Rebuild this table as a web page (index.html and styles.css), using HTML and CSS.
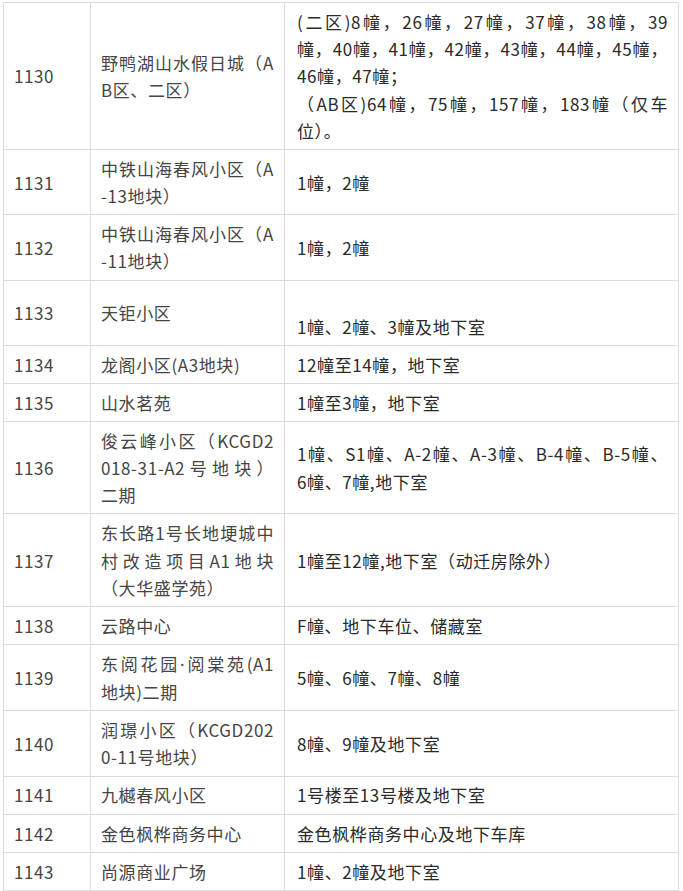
FILE: index.html
```html
<!DOCTYPE html>
<html lang="zh-CN">
<head>
<meta charset="utf-8">
<title>名单</title>
<link rel="stylesheet" href="styles.css">
</head>
<body>
<table class="list">
  <colgroup>
    <col class="c-no">
    <col class="c-name">
    <col class="c-scope">
  </colgroup>
  <tbody>
    <tr>
      <td class="no">1130</td>
      <td class="name"><span class="jl">野鸭湖山水假日城（A</span><span class="ln">B区、二区）</span></td>
      <td class="scope"><span class="jl">(二区)8幢，26幢，27幢，37幢，38幢，39</span><span class="jl">幢，40幢，41幢，42幢，43幢，44幢，45幢，</span><span class="ln">46幢，47幢；</span><span class="jl">（AB区)64幢，75幢，157幢，183幢（仅车</span><span class="ln">位）。</span></td>
    </tr>
    <tr>
      <td class="no">1131</td>
      <td class="name"><span class="jl">中铁山海春风小区（A</span><span class="ln">-13地块）</span></td>
      <td class="scope">1幢，2幢</td>
    </tr>
    <tr>
      <td class="no">1132</td>
      <td class="name"><span class="jl">中铁山海春风小区（A</span><span class="ln">-11地块）</span></td>
      <td class="scope">1幢，2幢</td>
    </tr>
    <tr>
      <td class="no">1133</td>
      <td class="name">天钜小区</td>
      <td class="scope"><span class="ln">&nbsp;</span><span class="ln">1幢、2幢、3幢及地下室</span></td>
    </tr>
    <tr>
      <td class="no">1134</td>
      <td class="name">龙阁小区(A3地块)</td>
      <td class="scope">12幢至14幢，地下室</td>
    </tr>
    <tr>
      <td class="no">1135</td>
      <td class="name">山水茗苑</td>
      <td class="scope">1幢至3幢，地下室</td>
    </tr>
    <tr>
      <td class="no">1136</td>
      <td class="name"><span class="jl">俊云峰小区（KCGD2</span><span class="jl">018-31-A2号地块）</span><span class="ln">二期</span></td>
      <td class="scope"><span class="jl">1幢、S1幢、A-2幢、A-3幢、B-4幢、B-5幢、</span><span class="ln">6幢、7幢,地下室</span></td>
    </tr>
    <tr>
      <td class="no">1137</td>
      <td class="name"><span class="jl">东长路1号长地埂城中</span><span class="jl">村改造项目A1地块</span><span class="ln">（大华盛学苑）</span></td>
      <td class="scope">1幢至12幢,地下室（动迁房除外）</td>
    </tr>
    <tr>
      <td class="no">1138</td>
      <td class="name">云路中心</td>
      <td class="scope">F幢、地下车位、储藏室</td>
    </tr>
    <tr>
      <td class="no">1139</td>
      <td class="name"><span class="jl">东阅花园<span class="dot">·</span>阅棠苑(A1</span><span class="ln">地块)二期</span></td>
      <td class="scope">5幢、6幢、7幢、8幢</td>
    </tr>
    <tr>
      <td class="no">1140</td>
      <td class="name"><span class="jl">润璟小区（KCGD202</span><span class="ln">0-11号地块）</span></td>
      <td class="scope">8幢、9幢及地下室</td>
    </tr>
    <tr>
      <td class="no">1141</td>
      <td class="name">九樾春风小区</td>
      <td class="scope">1号楼至13号楼及地下室</td>
    </tr>
    <tr>
      <td class="no">1142</td>
      <td class="name">金色枫桦商务中心</td>
      <td class="scope">金色枫桦商务中心及地下车库</td>
    </tr>
    <tr>
      <td class="no">1143</td>
      <td class="name">尚源商业广场</td>
      <td class="scope">1幢、2幢及地下室</td>
    </tr>
  </tbody>
</table>
</body>
</html>
```
FILE: styles.css
```css
html, body {
  margin: 0;
  padding: 0;
  background: #ffffff;
}

body {
  padding: 2px 0 0 3px;
}

.list {
  border-collapse: collapse;
  table-layout: fixed;
  width: 675px;
  font-family: "Noto Sans CJK SC", "Noto Sans", sans-serif;
  font-size: 17px;
  letter-spacing: 0.6px;
  line-height: 27.25px;
}

.c-no { width: 87px; }
.c-name { width: 194px; }
.c-scope { width: 394px; }

.list td {
  border: 1px solid #dcdcdc;
  padding: 4.9px 10px;
  vertical-align: middle;
  text-align: left;
}

.no {
  color: #454545;
}

.name {
  color: #454545;
}

.scope {
  color: #2a2a2a;
  padding-left: 12px !important;
}

.ln {
  display: block;
}

.jl {
  display: block;
  text-align: justify;
  text-align-last: justify;
}

.dot {
  font-family: "Noto Sans", sans-serif;
}
```
